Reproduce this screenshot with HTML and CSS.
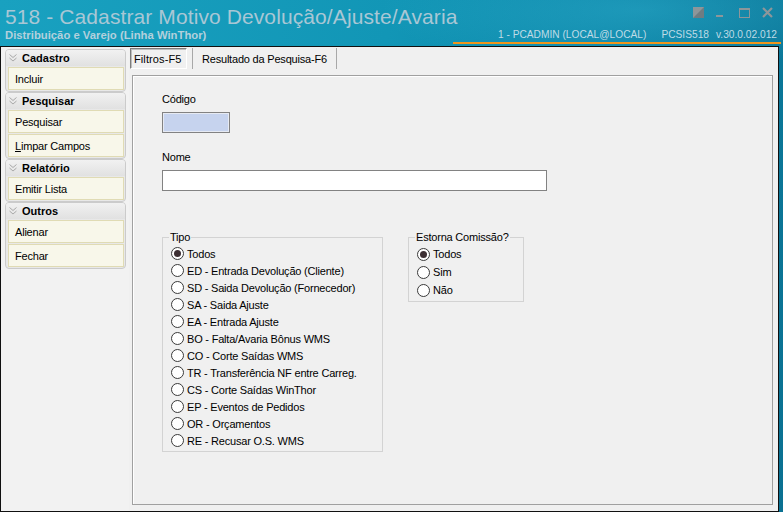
FILE: index.html
```html
<!DOCTYPE html>
<html lang="pt-BR">
<head>
    <meta charset="UTF-8">
    <meta name="viewport" content="width=device-width, initial-scale=1.0">
    <title>518 - Cadastrar Motivo Devolução/Ajuste/Avaria</title>
    <link rel="stylesheet" href="styles.css">
</head>
<body>
    <header class="titlebar">
        <div class="title-left">
            <div class="title">518 - Cadastrar Motivo Devolução/Ajuste/Avaria</div>
            <div class="subtitle">Distribuição e Varejo (Linha WinThor)</div>
        </div>
        <div class="title-right">
            <div class="win-buttons">
                <svg width="11" height="11" viewBox="0 0 11 11"><rect width="11" height="11" fill="#8d969a"/><polygon points="11,0 11,11 0,11" fill="#6f7c82"/></svg>
                <svg width="11" height="11" viewBox="0 0 11 11"><rect x="0" y="8" width="7" height="2" fill="#8d969a"/></svg>
                <svg width="11" height="11" viewBox="0 0 11 11"><rect x="0.5" y="1.5" width="10" height="9" fill="none" stroke="#8d969a"/><rect x="0" y="1" width="11" height="2" fill="#8d969a"/></svg>
                <svg width="11" height="11" viewBox="0 0 11 11"><path d="M1 1 L10 10 M10 1 L1 10" stroke="#8d969a" stroke-width="2.2"/></svg>
            </div>
            <div class="userinfo"><span>1 - PCADMIN (LOCAL@LOCAL)</span><span class="sys">PCSIS518</span><span class="ver">v.30.0.02.012</span></div>
        </div>
    </header>

    <div class="frame">
        <aside class="sidebar">
            <div class="group">
                <div class="group-head"><svg class="chev" width="8" height="8" viewBox="0 0 8 8"><path d="M0.5 0.5 L4 3.5 L7.5 0.5 M0.5 4 L4 7 L7.5 4" fill="none" stroke="#a9a9a9"/></svg>Cadastro</div>
                <div class="item">Incluir</div>
            </div>
            <div class="group">
                <div class="group-head"><svg class="chev" width="8" height="8" viewBox="0 0 8 8"><path d="M0.5 0.5 L4 3.5 L7.5 0.5 M0.5 4 L4 7 L7.5 4" fill="none" stroke="#a9a9a9"/></svg>Pesquisar</div>
                <div class="item">Pesquisar</div>
                <div class="item"><span><u>L</u>impar Campos</span></div>
            </div>
            <div class="group">
                <div class="group-head"><svg class="chev" width="8" height="8" viewBox="0 0 8 8"><path d="M0.5 0.5 L4 3.5 L7.5 0.5 M0.5 4 L4 7 L7.5 4" fill="none" stroke="#a9a9a9"/></svg>Relatório</div>
                <div class="item">Emitir Lista</div>
            </div>
            <div class="group">
                <div class="group-head"><svg class="chev" width="8" height="8" viewBox="0 0 8 8"><path d="M0.5 0.5 L4 3.5 L7.5 0.5 M0.5 4 L4 7 L7.5 4" fill="none" stroke="#a9a9a9"/></svg>Outros</div>
                <div class="item">Alienar</div>
                <div class="item">Fechar</div>
            </div>
        </aside>

        <section class="workarea">
            <div class="tabs">
                <div class="tab active">Filtros-F5</div>
                <div class="tab">Resultado da Pesquisa-F6</div>
            </div>
            <div class="panel">
                <div class="field-label">Código</div>
                <div class="field-input code-input"></div>
                <div class="field-label name-label">Nome</div>
                <div class="field-input name-input"></div>

                <div class="groups">
                    <fieldset class="opt tipo">
                        <legend>Tipo</legend>
                        <div class="radio-row"><span class="radio checked"></span>Todos</div>
                        <div class="radio-row"><span class="radio"></span>ED - Entrada Devolução (Cliente)</div>
                        <div class="radio-row"><span class="radio"></span>SD - Saida Devolução (Fornecedor)</div>
                        <div class="radio-row"><span class="radio"></span>SA - Saida Ajuste</div>
                        <div class="radio-row"><span class="radio"></span>EA - Entrada Ajuste</div>
                        <div class="radio-row"><span class="radio"></span>BO - Falta/Avaria Bônus WMS</div>
                        <div class="radio-row"><span class="radio"></span>CO - Corte Saídas WMS</div>
                        <div class="radio-row"><span class="radio"></span>TR - Transferência NF entre Carreg.</div>
                        <div class="radio-row"><span class="radio"></span>CS - Corte Saídas WinThor</div>
                        <div class="radio-row"><span class="radio"></span>EP - Eventos de Pedidos</div>
                        <div class="radio-row"><span class="radio"></span>OR - Orçamentos</div>
                        <div class="radio-row"><span class="radio"></span>RE - Recusar O.S. WMS</div>
                    </fieldset>
                    <fieldset class="opt estorna">
                        <legend>Estorna Comissão?</legend>
                        <div class="radio-row"><span class="radio checked"></span>Todos</div>
                        <div class="radio-row"><span class="radio"></span>Sim</div>
                        <div class="radio-row"><span class="radio"></span>Não</div>
                    </fieldset>
                </div>
            </div>
        </section>
    </div>
</body>
</html>
```

FILE: styles.css
```css
* {
    box-sizing: border-box;
}
body {
    margin: 0;
    width: 783px;
    height: 512px;
    overflow: hidden;
    font-family: "Liberation Sans", Arial, sans-serif;
    font-size: 11px;
    letter-spacing: -0.2px;
    color: #000;
    background:
        radial-gradient(ellipse 260px 60px at 640px 10px, rgba(60, 190, 220, 0.35), transparent),
        linear-gradient(100deg, #19a1c0 0%, #1296b6 45%, #0d86a8 70%, #0a7192 100%);
}

/* title bar */
.titlebar {
    display: flex;
    height: 46px;
    letter-spacing: 0;
}
.title-left {
    flex: 1;
    min-width: 0;
    padding: 6px 0 0 5px;
}
.title {
    font-size: 21px;
    line-height: 22px;
    letter-spacing: 0.1px;
    color: #a9c7d5;
    white-space: nowrap;
}
.subtitle {
    margin-top: 1px;
    font-size: 11.3px;
    font-weight: bold;
    line-height: 13px;
    color: #b3d0dc;
    white-space: nowrap;
}
.title-right {
    flex: none;
    display: flex;
    flex-direction: column;
    align-items: flex-end;
}
.win-buttons {
    display: flex;
    gap: 12px;
    padding-top: 7px;
    margin-right: 10px;
}
.win-buttons svg {
    display: block;
}
.userinfo {
    margin: auto 2px 2px 0;
    width: 328px;
    padding: 0 4px 1px 0;
    border-bottom: 2px solid #f0951c;
    text-align: right;
    font-size: 10.2px;
    line-height: 12px;
    color: #bfdbe6;
    white-space: nowrap;
}
.userinfo .sys {
    margin-left: 15px;
}
.userinfo .ver {
    margin-left: 7px;
}

/* main window */
.frame {
    display: flex;
    height: 466px;
    margin-right: 4px;
    border: 1px solid #101010;
    background: #f0f0f0;
}
.sidebar {
    width: 128px;
    padding: 2px 3px 0 4px;
    background: #f2f2f2;
}
.group {
    border: 1px solid #cbcbcb;
    border-radius: 4px;
    background: #e8e8e8;
    padding-bottom: 1px;
}
.group-head {
    display: flex;
    align-items: center;
    height: 16px;
    padding-left: 3px;
    font-weight: bold;
    letter-spacing: 0;
    border-radius: 3px 3px 0 0;
    background: linear-gradient(#f1f1f1, #e1e1e1);
}
.chev {
    margin-right: 5px;
}
.item {
    display: flex;
    align-items: center;
    height: 23px;
    margin: 1px 1px 0 2px;
    padding-left: 6px;
    border: 1px solid #e0dbb4;
    background: #f8f7ea;
}

.workarea {
    flex: 1;
    display: flex;
    flex-direction: column;
    padding: 1px 5px 6px 1px;
}
.tabs {
    display: flex;
    height: 21px;
    margin-bottom: 6px;
}
.tab {
    display: flex;
    align-items: center;
    height: 21px;
    padding: 0 9px;
    border-left: 1px solid #a8a8a8;
    border-right: 1px solid #a8a8a8;
    white-space: nowrap;
}
.tab.active {
    width: 57px;
    padding: 0 3px;
    margin-right: 5px;
    letter-spacing: 0.1px;
    border: 1px solid;
    border-color: #7d7d7d #fff #fff #7d7d7d;
    box-shadow: inset 1px 1px 0 #bdbdbd;
}
.panel {
    flex: 1;
    margin-left: 2px;
    padding: 17px 0 0 29px;
    border: 1px solid #a0a0a0;
    box-shadow: inset 1px 1px 0 #fff;
}
.field-label {
    line-height: 13px;
}
.name-label {
    margin-top: 18px;
}
.field-input {
    height: 21px;
    margin-top: 6px;
    border: 1px solid #828282;
}
.code-input {
    width: 68px;
    background: #c6d3ee;
    box-shadow: inset 0 0 0 1px #e6eaf3;
}
.name-input {
    width: 385px;
    background: #fff;
}

.groups {
    display: flex;
    align-items: flex-start;
    gap: 25px;
    margin-top: 40px;
}
.opt {
    margin: 0;
    min-width: 0;
    padding: 1px 4px 2px 6px;
    border: 1px solid #d3d3d3;
}
.opt legend {
    padding: 0 1px;
    line-height: 13px;
}
.tipo {
    width: 221px;
}
.estorna {
    width: 116px;
}
.radio-row {
    display: flex;
    align-items: center;
    gap: 3px;
    height: 17px;
    padding-left: 2px;
    white-space: nowrap;
}
.estorna .radio-row {
    height: 18px;
}
.radio {
    flex: none;
    display: flex;
    align-items: center;
    justify-content: center;
    width: 13px;
    height: 13px;
    border: 1px solid #3a3a3a;
    border-radius: 50%;
    background: #fff;
}
.radio.checked::after {
    content: "";
    width: 7px;
    height: 7px;
    border-radius: 50%;
    background: #3d2f33;
}
```
